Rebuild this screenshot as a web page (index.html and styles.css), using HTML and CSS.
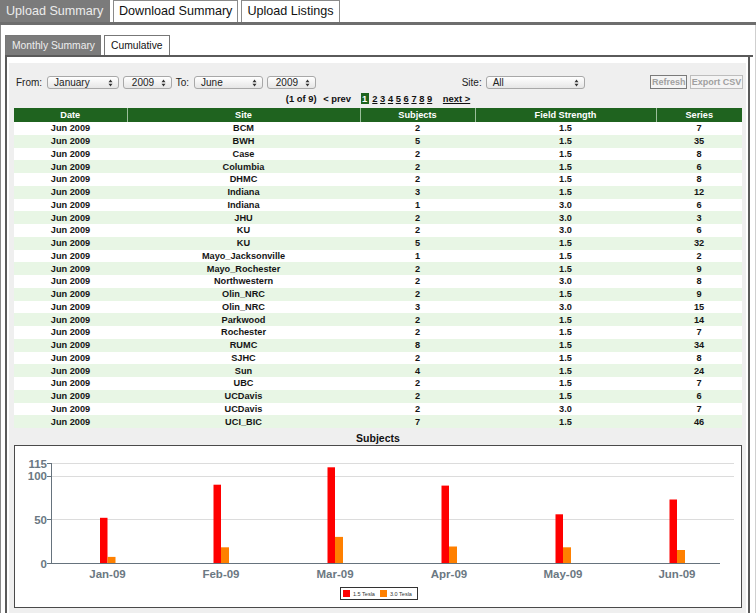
FILE: index.html
```html
<!DOCTYPE html>
<html>
<head>
<meta charset="utf-8">
<link rel="stylesheet" href="styles.css">
</head>
<body>
<div class="top-tabs">
  <div class="tab tab-active">Upload Summary</div>
  <div class="tab">Download Summary</div>
  <div class="tab">Upload Listings</div>
</div>
<div class="outer">
  <div class="sub-tabs">
    <div class="stab stab-active">Monthly Summary</div>
    <div class="stab">Cumulative</div>
  </div>
  <div class="inner">
    <div class="content">
      <div class="form-row">
        <span class="lbl lbl-from">From:</span>
        <div class="sel sel-month">January<svg class="arr" width="5" height="8" viewBox="0 0 5 8"><path d="M0.5 3.2 L2.5 0.5 L4.5 3.2Z M0.5 4.8 L2.5 7.5 L4.5 4.8Z" fill="#333"/></svg></div>
        <div class="sel sel-year">2009<svg class="arr" width="5" height="8" viewBox="0 0 5 8"><path d="M0.5 3.2 L2.5 0.5 L4.5 3.2Z M0.5 4.8 L2.5 7.5 L4.5 4.8Z" fill="#333"/></svg></div>
        <span class="lbl lbl-to">To:</span>
        <div class="sel sel-june">June<svg class="arr" width="5" height="8" viewBox="0 0 5 8"><path d="M0.5 3.2 L2.5 0.5 L4.5 3.2Z M0.5 4.8 L2.5 7.5 L4.5 4.8Z" fill="#333"/></svg></div>
        <div class="sel sel-year">2009<svg class="arr" width="5" height="8" viewBox="0 0 5 8"><path d="M0.5 3.2 L2.5 0.5 L4.5 3.2Z M0.5 4.8 L2.5 7.5 L4.5 4.8Z" fill="#333"/></svg></div>
        <span class="lbl lbl-site">Site:</span>
        <div class="sel sel-site">All<svg class="arr" width="5" height="8" viewBox="0 0 5 8"><path d="M0.5 3.2 L2.5 0.5 L4.5 3.2Z M0.5 4.8 L2.5 7.5 L4.5 4.8Z" fill="#333"/></svg></div>
        <div class="btn btn-refresh">Refresh</div>
        <div class="btn btn-export">Export CSV</div>
      </div>
      <div class="pager">
        <span>(1 of 9)</span>
        <span class="prev">&lt; prev</span>
        <span class="cur">1</span>
        <span class="pages"><u>2</u> <u>3</u> <u>4</u> <u>5</u> <u>6</u> <u>7</u> <u>8</u> <u>9</u></span>
        <u class="next">next &gt;</u>
      </div>
      <table class="data">
        <colgroup><col class="c1"><col class="c2"><col class="c3"><col class="c4"><col class="c5"></colgroup>
        <thead><tr><th>Date</th><th>Site</th><th>Subjects</th><th>Field Strength</th><th>Series</th></tr></thead>
        <tbody>
          <tr><td>Jun 2009</td><td>BCM</td><td>2</td><td>1.5</td><td>7</td></tr>
          <tr><td>Jun 2009</td><td>BWH</td><td>5</td><td>1.5</td><td>35</td></tr>
          <tr><td>Jun 2009</td><td>Case</td><td>2</td><td>1.5</td><td>8</td></tr>
          <tr><td>Jun 2009</td><td>Columbia</td><td>2</td><td>1.5</td><td>6</td></tr>
          <tr><td>Jun 2009</td><td>DHMC</td><td>2</td><td>1.5</td><td>8</td></tr>
          <tr><td>Jun 2009</td><td>Indiana</td><td>3</td><td>1.5</td><td>12</td></tr>
          <tr><td>Jun 2009</td><td>Indiana</td><td>1</td><td>3.0</td><td>6</td></tr>
          <tr><td>Jun 2009</td><td>JHU</td><td>2</td><td>3.0</td><td>3</td></tr>
          <tr><td>Jun 2009</td><td>KU</td><td>2</td><td>3.0</td><td>6</td></tr>
          <tr><td>Jun 2009</td><td>KU</td><td>5</td><td>1.5</td><td>32</td></tr>
          <tr><td>Jun 2009</td><td>Mayo_Jacksonville</td><td>1</td><td>1.5</td><td>2</td></tr>
          <tr><td>Jun 2009</td><td>Mayo_Rochester</td><td>2</td><td>1.5</td><td>9</td></tr>
          <tr><td>Jun 2009</td><td>Northwestern</td><td>2</td><td>3.0</td><td>8</td></tr>
          <tr><td>Jun 2009</td><td>Olin_NRC</td><td>2</td><td>1.5</td><td>9</td></tr>
          <tr><td>Jun 2009</td><td>Olin_NRC</td><td>3</td><td>3.0</td><td>15</td></tr>
          <tr><td>Jun 2009</td><td>Parkwood</td><td>2</td><td>1.5</td><td>14</td></tr>
          <tr><td>Jun 2009</td><td>Rochester</td><td>2</td><td>1.5</td><td>7</td></tr>
          <tr><td>Jun 2009</td><td>RUMC</td><td>8</td><td>1.5</td><td>34</td></tr>
          <tr><td>Jun 2009</td><td>SJHC</td><td>2</td><td>1.5</td><td>8</td></tr>
          <tr><td>Jun 2009</td><td>Sun</td><td>4</td><td>1.5</td><td>24</td></tr>
          <tr><td>Jun 2009</td><td>UBC</td><td>2</td><td>1.5</td><td>7</td></tr>
          <tr><td>Jun 2009</td><td>UCDavis</td><td>2</td><td>1.5</td><td>6</td></tr>
          <tr><td>Jun 2009</td><td>UCDavis</td><td>2</td><td>3.0</td><td>7</td></tr>
          <tr><td>Jun 2009</td><td>UCI_BIC</td><td>7</td><td>1.5</td><td>46</td></tr>
        </tbody>
      </table>
      <div class="chart-title">Subjects</div>
      <div class="chart-box">
        <svg class="chart" width="726" height="161" viewBox="0 0 726 161">
          <g stroke="#dcdcdc" stroke-width="1">
            <line x1="36" y1="17.5" x2="719" y2="17.5"/>
            <line x1="36" y1="30.5" x2="719" y2="30.5"/>
            <line x1="36" y1="73.5" x2="719" y2="73.5"/>
          </g>
          <g stroke="#66737d" stroke-width="1">
            <line x1="36.5" y1="17" x2="36.5" y2="117"/>
            <line x1="36" y1="117.5" x2="705" y2="117.5"/>
            <line x1="32" y1="17.5" x2="36" y2="17.5"/>
            <line x1="32" y1="30.5" x2="36" y2="30.5"/>
            <line x1="32" y1="73.5" x2="36" y2="73.5"/>
            <line x1="32" y1="117.5" x2="36" y2="117.5"/>
          </g>
          <g class="ylab" text-anchor="end">
            <text x="32" y="21.5">115</text>
            <text x="32" y="34">100</text>
            <text x="32" y="77.5">50</text>
            <text x="32" y="121.5">0</text>
          </g>
          <g fill="#ff0000">
            <rect x="85" y="71.8" width="7.5" height="45.2"/>
            <rect x="198.5" y="38.7" width="7.5" height="78.3"/>
            <rect x="312.5" y="21.3" width="7.5" height="95.7"/>
            <rect x="426.5" y="39.6" width="7.5" height="77.4"/>
            <rect x="540.5" y="68.3" width="7.5" height="48.7"/>
            <rect x="654.5" y="53.5" width="7.5" height="63.5"/>
          </g>
          <g fill="#ff8000">
            <rect x="92.5" y="110.9" width="8" height="6.1"/>
            <rect x="206" y="101.3" width="8" height="15.7"/>
            <rect x="320" y="90.9" width="8" height="26.1"/>
            <rect x="434" y="100.5" width="8" height="16.5"/>
            <rect x="548" y="101.3" width="8" height="15.7"/>
            <rect x="662" y="104" width="8" height="13"/>
          </g>
          <g class="xlab" text-anchor="middle">
            <text x="92.5" y="132">Jan-09</text>
            <text x="206" y="132">Feb-09</text>
            <text x="320" y="132">Mar-09</text>
            <text x="434" y="132">Apr-09</text>
            <text x="548" y="132">May-09</text>
            <text x="662" y="132">Jun-09</text>
          </g>
          <rect x="325.5" y="141.5" width="77" height="12" fill="#fff" stroke="#333" stroke-width="1"/>
          <rect x="328" y="144" width="7" height="7" fill="#ff0000"/>
          <text class="leg" x="338" y="150">1.5 Tesla</text>
          <rect x="365" y="144" width="7" height="7" fill="#ff8000"/>
          <text class="leg" x="375" y="150">3.0 Tesla</text>
        </svg>
      </div>
    </div>
  </div>
</div>
</body>
</html>
```

FILE: styles.css
```css
* { box-sizing: border-box; }
body {
  margin: 0;
  background: #fff;
  font-family: "Liberation Sans", Arial, sans-serif;
  color: #111;
  width: 756px;
  height: 613px;
  overflow: hidden;
  white-space: nowrap;
}
.top-tabs {
  display: flex;
  gap: 3px;
  height: 25px;
  border-bottom: 3px solid #6e6e6e;
}
.tab {
  height: 22px;
  border: 1px solid #8a8a8a;
  border-bottom: none;
  padding: 0 5px;
  font-size: 12.6px;
  line-height: 21px;
  color: #111;
  background: #fff;
}
.tab-active {
  background: #7b7b7b;
  color: #ececec;
  border-color: #7b7b7b;
  width: 110px;
  padding: 0 0 0 5px;
}
.outer {
  border-left: 1px solid #8a8a8a;
  border-right: 1px solid #cfcfcf;
  padding: 10px 5px 0 4px;
}
.sub-tabs {
  display: flex;
  gap: 3px;
  height: 22px;
  border-bottom: 2px solid #5a5a5a;
  margin-right: -3px;
}
.stab {
  height: 20px;
  border: 1px solid #777;
  border-bottom: none;
  padding: 0 6px;
  font-size: 10.3px;
  line-height: 19px;
  background: #fff;
}
.stab-active {
  background: #7b7b7b;
  color: #eee;
  width: 96px;
  padding: 0 0 0 6px;
}
.inner {
  border-left: 2px solid #5a5a5a;
  border-right: 2px solid #5a5a5a;
  padding: 6px 2px 0 2px;
  background: #fff;
  height: 560px;
}
.content {
  background: #efefef;
  padding: 12px 3px 0 5px;
  height: 560px;
}
.form-row {
  display: flex;
  align-items: center;
  height: 14px;
  font-size: 10px;
  color: #222;
}
.lbl-from { margin-left: 2px; }
.sel {
  position: relative;
  height: 13px;
  border: 1px solid #a8a8a8;
  border-radius: 3px;
  background: linear-gradient(#ffffff, #e6e6e6);
  font-size: 10px;
  line-height: 11px;
  padding-left: 6px;
  color: #222;
}
.arr {
  position: absolute;
  right: 5px;
  top: 2px;
}
.sel-month { width: 72px; margin-left: 5px; }
.sel-year { width: 49px; margin-left: 4px; padding-left: 8px; }
.lbl-to { margin-left: 4px; }
.sel-june { width: 69px; margin-left: 5px; }
.lbl-site { margin-left: 146px; }
.sel-site { width: 100px; margin-left: 4px; }
.btn {
  height: 14px;
  font-size: 9px;
  font-weight: bold;
  line-height: 12px;
  color: #a0a0a0;
  background: #f4f4f4;
  text-align: center;
  overflow: hidden;
}
.btn-refresh { width: 37px; margin-left: 65px; border: 1px solid #7a7a7a; }
.btn-export { width: 53px; margin-left: 3px; border: 1px solid #bdbdbd; }
.pager {
  height: 19px;
  padding-top: 4px;
  text-align: center;
  font-size: 9.4px;
  font-weight: bold;
  line-height: 12px;
  color: #111;
  width: 728px;
}
.prev { margin-left: 4px; }
.cur {
  display: inline-block;
  background: #1e631e;
  color: #fff;
  width: 8px;
  height: 11px;
  line-height: 11px;
  margin-left: 7px;
  text-align: center;
}
.pages { margin-left: 1px; }
.next { margin-left: 8px; }
.data {
  width: 728px;
  border-collapse: collapse;
  table-layout: fixed;
  background: #fff;
  font-size: 9.2px;
  font-weight: bold;
}
.c1 { width: 113px; }
.c2 { width: 233px; }
.c3 { width: 115px; }
.c4 { width: 181px; }
.c5 { width: 86px; }
.data th {
  background: #1f631f;
  color: #fff;
  height: 14px;
  padding: 0;
  line-height: 13px;
  border-left: 1px solid #9bbf9b;
  font-weight: bold;
}
.data th:first-child { border-left: none; }
.data td {
  height: 12.75px;
  padding: 0;
  line-height: 12px;
  text-align: center;
  color: #151515;
}
.data tbody tr:nth-child(even) td { background: #e8f6e5; }
.chart-title {
  text-align: center;
  font-size: 10.5px;
  font-weight: bold;
  height: 17px;
  line-height: 20px;
  width: 728px;
}
.chart-box {
  width: 728px;
  height: 163px;
  border: 1px solid #4a4a4a;
  background: #fff;
}
.chart { display: block; }
.ylab text {
  font-family: "Liberation Sans", Arial, sans-serif;
  font-size: 11.5px;
  font-weight: bold;
  fill: #6b7882;
}
.xlab text {
  font-family: "Liberation Sans", Arial, sans-serif;
  font-size: 11.5px;
  font-weight: bold;
  fill: #6b7882;
}
.leg {
  font-family: "Liberation Sans", Arial, sans-serif;
  font-size: 5.5px;
  fill: #333;
}
```
